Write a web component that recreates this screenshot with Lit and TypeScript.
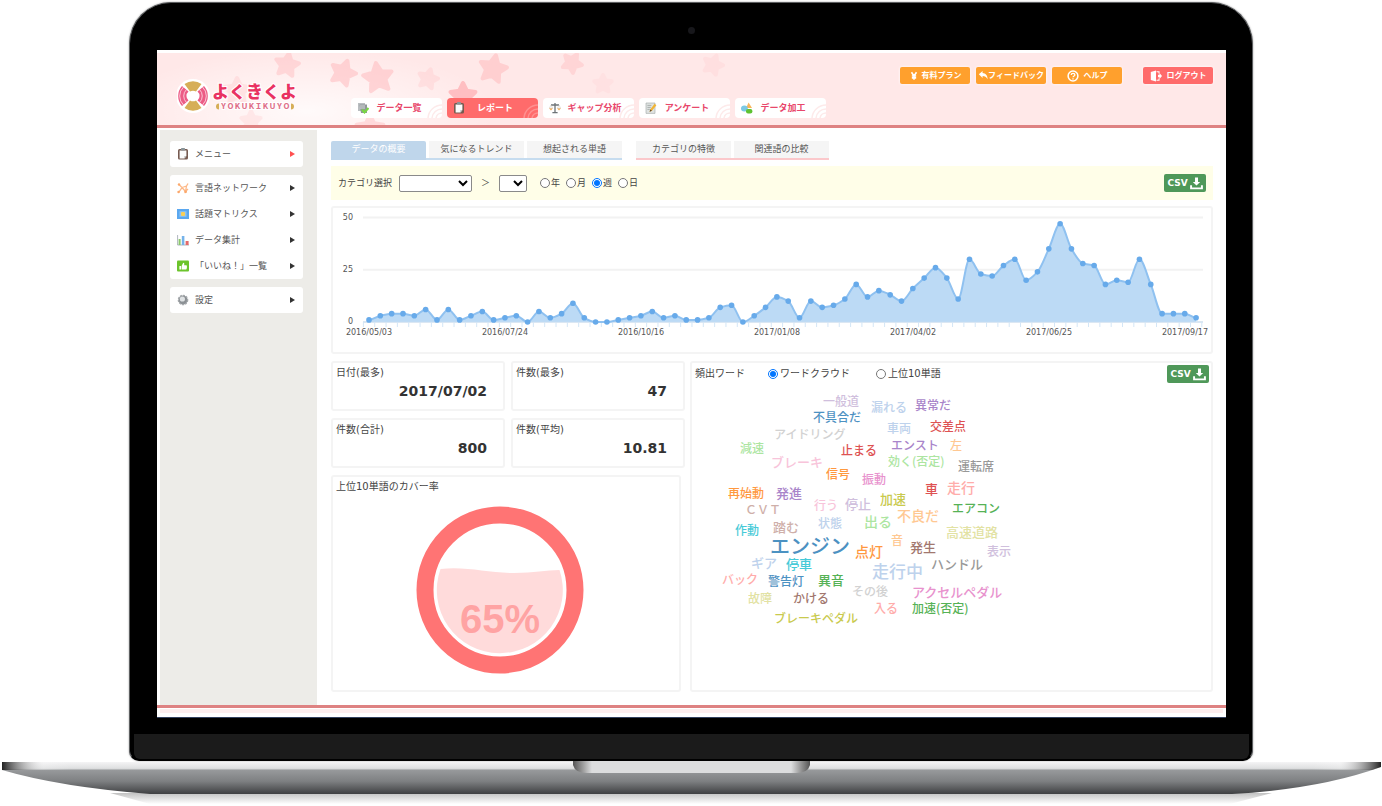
import { LitElement, html, svg, css } from "lit";
import { customElement, state } from "lit/decorators.js";
import { classMap } from "lit/directives/class-map.js";

/* ---------- icons ---------- */

const icon = (name: string) => html`<svg class="icon" viewBox="0 0 12 12" aria-hidden="true">${ICONS[name]}</svg>`;

const ICONS: Record<string, unknown> = {
  list: svg`<path d="M1 1h7v8H1z" fill="#b9bdc0"/><path d="M2.5 2.5H10V11H4z" fill="#8f9699"/><path d="M3 4h5M3 6h5" stroke="#e8ecec" stroke-width=".8"/><path d="M5 7.5 7.5 10.5 11.5 6" fill="none" stroke="#79d843" stroke-width="2"/>`,
  clip: svg`<rect x="1" y="1" width="10" height="10.5" rx="1.5" fill="#765a50"/><path d="M2.6 2.4h6.8v5.6L7.4 10.4H2.6z" fill="#fbfbfb"/><path d="M9.4 8 7.4 10.4V8z" fill="#b9b9b9"/><rect x="4" y="0" width="4" height="2.4" rx=".6" fill="#8a9498"/>`,
  scale: svg`<path d="M6 1v9M2 3h8M3.4 10.6h5.2" stroke="#6d7377" stroke-width="1.3" fill="none"/><path d="M0 6.2h4L2 8.4zM8 6.2h4L10 8.4z" fill="#f6ad52"/><path d="M2 3 .4 6.2h3.2zM10 3 8.4 6.2h3.2z" fill="none" stroke="#c9c2b8" stroke-width=".5"/>`,
  note: svg`<path d="M1 1h9v10.4H1z" fill="#dfe3e2" stroke="#9da5a4" stroke-width=".6"/><path d="M2.4 3.4h4M2.4 5.4h3.4M2.4 7.4h2.4" stroke="#9aa2a1" stroke-width=".8"/><path d="M4.6 9.8 5.2 7.4 9.6 1.8l1.8 1.4-4.4 5.6z" fill="#f1b434"/><path d="M4.6 9.8 5.2 7.4 7 8.8z" fill="#5c4a35"/>`,
  parts: svg`<path d="M7.6.6 11 6H5z" fill="#f8b55a"/><ellipse cx="3.4" cy="6.4" rx="3.4" ry="3" fill="#7cc9e4"/><rect x="5" y="7" width="6.4" height="4.4" rx="2" fill="#5ec232"/>`,
  net: svg`<path d="M2 2.5 5 5.5 2 10M5 5.5 9.5 4 11 1.5M5 5.5 8.5 9.5M9.5 4 8.5 9.5 11 7" fill="none" stroke="#fdb887" stroke-width="1.3"/><circle cx="2" cy="2.5" r="1.2" fill="#fba86c"/><circle cx="1.6" cy="10" r="1.3" fill="#fba86c"/><circle cx="8.6" cy="9.8" r="1.4" fill="#fba86c"/>`,
  matrix: svg`<rect y="1" width="12" height="10" fill="#5ba8f0"/><path d="M2.5 3.2h7v5.6h-7z" fill="#8cc4f6"/><rect x="4" y="4" width="4" height="4" rx="1" fill="#f9cf58"/>`,
  bars: svg`<path d="M.6 1v10H12" fill="none" stroke="#9aa3ad" stroke-width=".8"/><path d="M1.6 5h2v6h-2z" fill="#8ac76b"/><path d="M4.8 2h2.6v9H4.8z" fill="#76b3ea"/><path d="M8.6 7h3v4h-3z" fill="#e56a6a"/>`,
  like: svg`<rect y=".6" width="12" height="11" rx="1" fill="#6cc42c"/><path d="M2.4 6h1.6v3.6H2.4zM4.600 6 6.200 2.800c1.400 0 1.200 1.400.9 2.400h2.300c.9 0 .7 4.400-.5 4.400H4.600z" fill="#fff"/>`,
  gear: svg`<circle cx="6" cy="6" r="4.6" fill="#8b9094" stroke="#a5a9ac" stroke-width="1.4" stroke-dasharray="2 1"/><circle cx="5.4" cy="5" r="2.6" fill="#dfe2e4"/>`,
  yen: svg`<path d="M3 1.5 6 6 9 1.5M6 6v4.5M3.400 6h5.200M3.400 8.200h5.200" fill="none" stroke="#fff" stroke-width="1.9"/>`,
  back: svg`<path d="M1 4 5.500 0v2.400C9 2.600 11.500 5 11.500 10 10 7.200 8.200 6 5.500 6v2.300z" fill="#fff"/>`,
  help: svg`<circle cx="6" cy="6" r="4.9" fill="none" stroke="#fff" stroke-width="1.5"/><path d="M4.200 4.900C4.200 2.800 7.900 2.800 7.900 4.900 7.900 6 6 6 6 7.300M6 8.200v1.200" fill="none" stroke="#fff" stroke-width="1.3"/>`,
  exit: svg`<path d="M.8 2 6 .6v10.800L.8 10z" fill="#fff"/><path d="M6.500 1.800H9v1.800M6.500 10.200H9V8.400" fill="none" stroke="#fff" stroke-width="1.1"/><path d="M8 4.700h1.500V3L12 6 9.500 9V7.300H8z" fill="#fff"/>`,
  save: svg`<path d="M4.600.5h2.800v4h2L6 7.900 2.600 4.500h2z" fill="#fff"/><path d="M1 7.500v3h10v-3" fill="none" stroke="#fff" stroke-width="1.8"/>`,
};

/* ---------- data ---------- */

const NAV = [
  { label: "データ一覧", icon: "list" },
  { label: "レポート", icon: "clip" },
  { label: "ギャップ分析", icon: "scale" },
  { label: "アンケート", icon: "note" },
  { label: "データ加工", icon: "parts" },
];

const ACTIONS = [
  { label: "有料プラン", icon: "yen" },
  { label: "フィードバック", icon: "back" },
  { label: "ヘルプ", icon: "help" },
  { label: "ログアウト", icon: "exit" },
];

const MENU = [
  [{ label: "メニュー", icon: "clip" }],
  [
    { label: "言語ネットワーク", icon: "net" },
    { label: "話題マトリクス", icon: "matrix" },
    { label: "データ集計", icon: "bars" },
    { label: "「いいね！」一覧", icon: "like" },
  ],
  [{ label: "設定", icon: "gear" }],
];

const TAB_GROUPS = [
  { tone: "blue", tabs: ["データの概要", "気になるトレンド", "想起される単語"] },
  { tone: "pink", tabs: ["カテゴリの特徴", "関連語の比較"] },
];

const STATS = [
  ["日付(最多)", "2017/07/02"],
  ["件数(最多)", "47"],
  ["件数(合計)", "800"],
  ["件数(平均)", "10.81"],
];

const WEEKLY = [
  1, 3, 4, 4, 3, 6, 1, 6, 1, 3, 5, 1, 2, 3, 0, 5, 2, 4, 9, 2, 0, 0, 1, 2, 3, 5, 2, 3, 1, 1, 2, 7, 8, 0, 3, 7, 12, 10,
  2, 10, 7, 8, 11, 18, 12, 15, 13, 10, 16, 21, 26, 21, 11, 30, 23, 22, 27, 30, 20, 24, 35, 47, 35, 28, 27, 18, 20, 19,
  30, 18, 4, 4, 4, 2,
];
const DATES = ["2016/05/03", "2016/07/24", "2016/10/16", "2017/01/08", "2017/04/02", "2017/06/25", "2017/09/17"];

/* text, left, vertical middle, size, colour */
const WORDS: [string, number, number, number, string][] = [
  ["一般道", 131, 41, 12, "#c5b0d5"],
  ["漏れる", 179, 47, 12, "#aec7e8"],
  ["異常だ", 223, 45, 12, "#9467bd"],
  ["不具合だ", 121, 57, 12, "#1f77b4"],
  ["車両", 195, 68, 12, "#aec7e8"],
  ["交差点", 238, 66, 12, "#d62728"],
  ["アイドリング", 82, 74, 12, "#c7c7c7"],
  ["エンスト", 199, 85, 12, "#9467bd"],
  ["左", 258, 85, 12, "#ffbb78"],
  ["減速", 48, 88, 12, "#98df8a"],
  ["止まる", 149, 90, 12, "#d62728"],
  ["ブレーキ", 79, 101, 13, "#f7b6d2"],
  ["効く(否定)", 196, 101, 12, "#98df8a"],
  ["運転席", 266, 106, 12, "#7f7f7f"],
  ["信号", 134, 114, 12, "#ff7f0e"],
  ["振動", 170, 119, 12, "#e377c2"],
  ["車", 233, 128, 13, "#d62728"],
  ["走行", 255, 127, 14, "#ff9896"],
  ["再始動", 36, 133, 12, "#ff7f0e"],
  ["発進", 84, 132, 13, "#9467bd"],
  ["加速", 188, 138, 13, "#bcbd22"],
  ["行う", 122, 145, 12, "#f7b6d2"],
  ["停止", 153, 143, 13, "#c5b0d5"],
  ["ＣＶＴ", 53, 149, 12, "#c49c94"],
  ["エアコン", 260, 148, 12, "#2ca02c"],
  ["不良だ", 205, 155, 14, "#ffbb78"],
  ["状態", 126, 163, 12, "#aec7e8"],
  ["出る", 172, 161, 14, "#98df8a"],
  ["高速道路", 254, 171, 13, "#dbdb8d"],
  ["踏む", 81, 166, 13, "#c49c94"],
  ["作動", 43, 170, 12, "#17becf"],
  ["音", 199, 180, 12, "#ffbb78"],
  ["発生", 218, 186, 13, "#8c564b"],
  ["表示", 295, 191, 12, "#c5b0d5"],
  ["エンジン", 78, 186, 20, "#1f77b4"],
  ["点灯", 163, 191, 14, "#ff7f0e"],
  ["ギア", 59, 202, 13, "#aec7e8"],
  ["停車", 94, 203, 13, "#17becf"],
  ["走行中", 180, 211, 17, "#aec7e8"],
  ["ハンドル", 239, 203, 13, "#7f7f7f"],
  ["バック", 30, 219, 12, "#ff9896"],
  ["警告灯", 76, 221, 12, "#1f77b4"],
  ["異音", 126, 219, 13, "#2ca02c"],
  ["その後", 160, 231, 12, "#c7c7c7"],
  ["アクセルペダル", 220, 231, 13, "#e377c2"],
  ["故障", 56, 238, 12, "#dbdb8d"],
  ["かける", 101, 238, 12, "#8c564b"],
  ["入る", 182, 248, 12, "#ff9896"],
  ["加速(否定)", 220, 248, 12, "#2ca02c"],
  ["ブレーキペダル", 82, 258, 12, "#bcbd22"],
];

/* centre x, centre y, radius, turn, opacity */
const STARS: number[][] = [
  [130, 12, 12, 10, 0.5],
  [186, 20, 13, 20, 0.6],
  [221, 25, 15, -8, 0.6],
  [80, 38, 13, 0, 0.3],
  [271, 26, 10, 15, 0.3],
  [306, 43, 13, 0, 1],
  [336, 16, 14, 12, 0.6],
  [415, 10, 10, 30, 0.45],
  [446, 31, 9, 0, 0.15],
  [556, 12, 10, 20, 0.2],
  [94, 68, 10, 0, 0.25],
  [213, 76, 14, 0, 0.5],
];

const starPoints = (cx: number, cy: number, r: number, turn: number) =>
  Array.from({ length: 10 }, (_, i) => {
    const a = ((i * 36 - 90 + turn) * Math.PI) / 180;
    const d = i % 2 ? r * 0.5 : r;
    return `${(cx + d * Math.cos(a)).toFixed(1)},${(cy + d * Math.sin(a)).toFixed(1)}`;
  }).join(" ");

/* smooth curve through the points, flat at each local extreme */
function curve(p: number[][]): string {
  const slope = p.map((_, i) => {
    if (i === 0 || i === p.length - 1) return 0;
    const a = (p[i][1] - p[i - 1][1]) / (p[i][0] - p[i - 1][0]);
    const b = (p[i + 1][1] - p[i][1]) / (p[i + 1][0] - p[i][0]);
    return a * b <= 0 ? 0 : (2 * a * b) / (a + b);
  });
  let d = `M${p[0][0]} ${p[0][1]}`;
  for (let i = 1; i < p.length; i++) {
    const h = (p[i][0] - p[i - 1][0]) / 3;
    d += `C${p[i - 1][0] + h} ${p[i - 1][1] + slope[i - 1] * h} ${p[i][0] - h} ${p[i][1] - slope[i] * h} ${p[i][0]} ${p[i][1]}`;
  }
  return d;
}

@customElement("app-root")
export class AppRoot extends LitElement {
  @state() private unit = "週";
  @state() private wordView = "ワードクラウド";

  static styles = css`
    :host {
      display: block;
      box-sizing: border-box;
      min-height: 100vh;
      padding-top: 2px;
      background: #fff;
      color: #444;
      font-family: "DejaVu Sans", "Noto Sans CJK JP", sans-serif;
      font-size: 9px;
      line-height: 12px;
    }
    * { box-sizing: border-box; }
    a { color: inherit; text-decoration: none; }
    button { font: inherit; border: 0; padding: 0; cursor: pointer; }
    svg { display: block; }
    .icon { width: 12px; height: 12px; flex: none; }

    /* laptop */
    .lid {
      margin: 0 129px;
      padding: 0 26px 0 27px;
      border: 1px solid #5c5e60;
      border-bottom: 2px solid #000;
      border-radius: 42px 42px 10px 10px;
      background: #000;
      box-shadow: 0 0 2px #999;
    }
    .bezel { height: 47px; display: grid; place-items: center; padding-top: 8px; }
    .camera { width: 7px; height: 7px; border-radius: 50%; background: #17171b; }
    .chin { height: 25px; margin: 16px -23px 0; background: #1b1b1b; border-radius: 0 0 6px 6px; }
    .base { width: 100%; height: 46px; }
    .screen { background: #fff; padding: 3px 0 4px; border-bottom: 1px solid #33415e; }

    /* header */
    .header {
      position: relative;
      display: flex;
      height: 75px;
      padding: 0 13px 0 20px;
      background: #ffe8e8;
      border-bottom: 3px solid #de8282;
    }
    .stars { position: absolute; left: 0; top: 0; width: 640px; height: 72px; }
    .header > *:not(.stars) { position: relative; }
    .logo { width: 122px; height: 36px; margin: 25px 52px 0 0; flex: none; }
    .nav { display: flex; gap: 5px; align-self: flex-end; margin-bottom: 7px; }
    .nav a {
      position: relative;
      display: flex;
      align-items: center;
      width: 91px;
      height: 20px;
      padding: 0 13px 0 6px;
      border-radius: 4px;
      background: #fff;
      color: #e8476b;
      font-weight: 700;
      white-space: nowrap;
    }
    .nav span { flex: 1; display: flex; justify-content: center; }
    .nav .wide { padding-right: 6px; }
    .nav .on { background: #ff6b6b; color: #fff; }
    .arcs { position: absolute; right: 0; bottom: 0; width: 16px; height: 16px; stroke: #fdeaea; fill: none; }
    .on .arcs { stroke: #ff9090; }
    .actions { display: flex; gap: 6px; margin: 14px 0 0 auto; }
    .actions button {
      display: flex;
      align-items: center;
      justify-content: center;
      gap: 3px;
      width: 70px;
      height: 17px;
      border-radius: 2px;
      background: #ffa02d;
      box-shadow: 0 0 3px #fff;
      color: #fff;
      font-size: 8px;
      font-weight: 700;
      white-space: nowrap;
    }
    .actions .icon { width: 10px; height: 10px; }
    .actions button:nth-child(2) { gap: 0; }
    .actions button:nth-child(n + 3) { gap: 5px; }
    .actions button:nth-child(n + 3) .icon { width: 12px; height: 12px; }
    .actions button:last-child { margin-left: 15px; background: #ff6b6b; }

    /* body */
    .body { display: flex; margin: 0 0 1px; border-bottom: 3px solid #de8282; }
    .side {
      width: 157px;
      flex: none;
      margin: 2px 0 0 3px;
      padding: 11px 14px 0 10px;
      display: flex;
      flex-direction: column;
      gap: 8px;
      background: #edece8;
    }
    .side ul { margin: 0; padding: 0; list-style: none; background: #fff; border-radius: 3px; }
    .side a { display: flex; align-items: center; gap: 6px; height: 26px; padding: 0 8px 0 7px; color: #555; }
    .side a::after {
      content: "";
      margin-left: auto;
      border-left: 5px solid #333;
      border-top: 3px solid transparent;
      border-bottom: 3px solid transparent;
    }
    .side ul:first-child a::after { border-left-color: #ff5050; }
    .foot { height: 4px; background: #fdeeee; margin: 0 3px; }

    .main { flex: 1; min-width: 0; padding: 13px 13px 13px 14px; }
    .tabs { display: flex; gap: 14px; margin-bottom: 6px; }
    .group { display: flex; gap: 3px; height: 19px; border-bottom: 2px solid #c6dcef; }
    .group.pink { border-bottom-color: #fbc8cb; }
    .group a { width: 95px; height: 17px; background: #f5f5f5; text-align: center; line-height: 17px; color: #555; }
    .group .on { height: 19px; background: #bfd6eb; color: #fff; border-radius: 2px 2px 0 0; }

    .filter {
      display: flex;
      align-items: center;
      height: 34px;
      padding: 0 7px;
      margin-bottom: 6px;
      background: #fffee8;
    }
    .filter .field { display: flex; align-items: center; gap: 7px; }
    select { height: 17px; width: 73px; font-size: 9px; padding: 0; border: 1px solid #8a8a8a; border-radius: 2px; background: #fff; }
    .small { width: 28px; }
    .sep { width: 27px; text-align: center; }
    fieldset { display: flex; margin: 0; padding: 0; border: 0; }
    .units { gap: 6px; margin-left: 13px; }
    .units label, .views label { display: flex; align-items: center; gap: 1px; }
    input { width: 10px; height: 10px; margin: 0; }
    .csv {
      display: flex;
      align-items: center;
      justify-content: center;
      gap: 2px;
      width: 42px;
      height: 18px;
      margin-left: auto;
      border-radius: 2px;
      background: #4f9859;
      color: #fff;
      font-size: 9px;
      font-weight: 700;
    }
    .csv .icon { width: 13px; height: 13px; }

    .card { border: 2px solid #f4f4f4; border-radius: 3px; background: #fff; font-size: 10px; }
    .chart { margin-bottom: 7px; }
    .chart svg { width: 100%; height: auto; }
    .axis { font-size: 8px; fill: #555; }

    .lower { display: grid; grid-template-columns: 354fr 523fr; gap: 5px; }
    .stats { display: grid; grid-template-columns: 1fr 1fr; gap: 7px 6px; }
    .stat { height: 50px; margin: 0; padding: 3px 16px 0 3px; }
    .stat dt { line-height: 14px; }
    .stat dd { margin: 0; text-align: right; font-size: 14px; line-height: 22px; font-weight: 700; color: #333; }
    .cover { grid-column: 1 / 3; margin-right: 4px; height: 217px; padding: 3px 16px 0 3px; }
    .cover h2, .cloud h2 { margin: 0; font-size: 10px; line-height: 14px; font-weight: 400; }
    .gauge { width: 168px; height: 168px; margin: 12px auto 0; }
    .gauge text { font: 700 40px "Liberation Sans", sans-serif; fill: #ffa3a3; }
    .head { display: flex; align-items: center; padding: 2px 2px 0 3px; }
    .views { gap: 26px; margin-left: 23px; }
    .views label { gap: 2px; }
    .cloud svg.words { width: 100%; height: auto; }
    .words text { opacity: 0.8; font-family: "Noto Sans CJK JP", sans-serif; font-weight: 500; }
  `;

  private chart() {
    const base = 114;
    const pts = WEEKLY.map((v, i) => [36 + i * 11.33, base - v * 2.09]);
    const line = curve(pts);
    return html`<section class="card chart" aria-label="週別件数">
      <svg viewBox="0 0 878 144" role="img">
        ${[50, 25, 0].map(
          (v) => svg`<path d=${`M30 ${base - v * 2.09}H870`} stroke="#f2f2f2" stroke-width="2"/>
            <text class="axis" x="20" y=${base + 2 - v * 2.09} text-anchor="end">${v}</text>`
        )}
        <path d="${line}V${base}H${pts[0][0]}Z" fill="#bcdaf5" />
        <path d="M30 ${base}H870" stroke="#c3dcf3" />
        ${Array.from({ length: 75 }, (_, i) => svg`<path d=${`M${30.4 + i * 11.33} ${base}v5`} stroke="#d4e6f6"/>`)}
        <path d=${line} fill="none" stroke="#8fc1f0" stroke-width="2" />
        ${pts.map((p) => svg`<circle cx=${p[0]} cy=${p[1]} r="2.8" fill="#67aaea"/>`)}
        ${DATES.map((d, i) => svg`<text class="axis" x=${36 + i * 136} y="127" text-anchor="middle">${d}</text>`)}
      </svg>
    </section>`;
  }

  private logo() {
    return html`<svg class="logo" viewBox="0 0 122 36" role="img" aria-label="よくきくよ">
      <circle cx="16" cy="18" r="17" fill="#fff" />
      <path d="M7.500 6A15 15 0 0 1 24.500 6L19 13.500A6 6 0 0 0 13 13.500Z" fill="#d6ae57" />
      <path d="M7.500 30A15 15 0 0 0 24.500 30L19 22.500A6 6 0 0 1 13 22.500Z" fill="#d6ae57" />
      <path d="M5 8A15 15 0 0 0 5 28L11.500 22.500A6 6 0 0 1 11.500 13.500Z" fill="#ec5c86" />
      <path d="M27 8A15 15 0 0 1 27 28L20.500 22.500A6 6 0 0 0 20.500 13.500Z" fill="#ec5c86" />
      <path d="M6.500 9A12.500 12.500 0 0 0 6.500 27M9.500 11.500A9 9 0 0 0 9.500 24.500M25.500 9A12.500 12.500 0 0 1 25.500 27M22.500 11.500A9 9 0 0 1 22.500 24.500" fill="none" stroke="#fde3ea" stroke-width=".8" />
      <g font-family="Noto Sans CJK JP, sans-serif" font-weight="900" fill="#e93262" stroke="#fff" stroke-width="2" paint-order="stroke">
        <text x="35" y="20" font-size="17">よくきくよ</text>
        <text x="43" y="31" font-size="7" fill="#e0708a">ＹＯＫＵＫＩＫＵＹＯ</text>
      </g>
      <path d="M42 25.500a3 3 0 1 0 0 6zM114 25.500a3 3 0 1 1 0 6z" fill="#d6ae57" />
    </svg>`;
  }

  render() {
    return html`
      <div class="lid">
        <div class="bezel"><div class="camera"></div></div>
        <div class="screen">
          <header class="header">
            <svg class="stars" viewBox="0 0 640 72" aria-hidden="true">
              <defs>
                <radialGradient id="glow"><stop offset="0" stop-color="#fff" stop-opacity=".8" /><stop offset="1" stop-color="#fff" stop-opacity="0" /></radialGradient>
              </defs>
              <ellipse cx="150" cy="58" rx="190" ry="62" fill="url(#glow)" />
              ${STARS.map(([x, y, r, t, o]) => svg`<polygon points=${starPoints(x, y, r, t)} fill="#ffb4b8" opacity=${o * 0.8} stroke="#ffb4b8" stroke-width="4" stroke-linejoin="round"/>`)}
            </svg>
            ${this.logo()}
            <nav class="nav">
              ${NAV.map(
                (n, i) => html`<a href="#" class=${classMap({ on: i === 1, wide: i === 2 })}>
                  ${icon(n.icon)}<span>${n.label}</span>
                  <svg class="arcs" viewBox="0 0 16 16" aria-hidden="true"><path d="M2 16A14 14 0 0 1 16 3M6 16A10 10 0 0 1 16 7M10 16A6 6 0 0 1 16 11" stroke-width="1.5" /></svg>
                </a>`
              )}
            </nav>
            <div class="actions">
              ${ACTIONS.map((a) => html`<button type="button">${icon(a.icon)}${a.label}</button>`)}
            </div>
          </header>
          <div class="body">
            <aside class="side">
              ${MENU.map(
                (g) => html`<ul>
                  ${g.map((m) => html`<li><a href="#">${icon(m.icon)}${m.label}</a></li>`)}
                </ul>`
              )}
            </aside>
            <main class="main">
              <nav class="tabs">
                ${TAB_GROUPS.map(
                  (g) => html`<div class="group ${g.tone}">
                    ${g.tabs.map((t) => html`<a href="#" class=${classMap({ on: t === "データの概要" })}>${t}</a>`)}
                  </div>`
                )}
              </nav>
              <form class="filter">
                <div class="field">
                  <label for="category">カテゴリ選択</label>
                  <select id="category"><option></option></select>
                </div>
                <span class="sep">＞</span>
                <select class="small" aria-label="サブカテゴリ"><option></option></select>
                <fieldset class="units" aria-label="集計単位">
                  ${["年", "月", "週", "日"].map(
                    (u) => html`<label><input type="radio" name="unit" .checked=${u === this.unit} @change=${() => (this.unit = u)} />${u}</label>`
                  )}
                </fieldset>
                <button type="button" class="csv">CSV${icon("save")}</button>
              </form>
              ${this.chart()}
              <div class="lower">
                <div class="stats">
                  ${STATS.map(([k, v]) => html`<dl class="card stat"><dt>${k}</dt><dd>${v}</dd></dl>`)}
                  <section class="card cover">
                    <h2>上位10単語のカバー率</h2>
                    <svg class="gauge" viewBox="0 0 168 168" role="img" aria-label="65%">
                      <circle cx="84" cy="84" r="75" fill="none" stroke="#ff7474" stroke-width="17" />
                      <path d="M24.500 63C50 60 72 67 98 67 118 67 130 64 143.500 64A63 63 0 1 1 24.500 63Z" fill="#ffdbdb" />
                      <text x="84" y="127" text-anchor="middle">65%</text>
                    </svg>
                  </section>
                </div>
                <section class="card cloud">
                  <div class="head">
                    <h2>頻出ワード</h2>
                    <fieldset class="views" aria-label="表示形式">
                      ${["ワードクラウド", "上位10単語"].map(
                        (v) => html`<label><input type="radio" name="view" .checked=${v === this.wordView} @change=${() => (this.wordView = v)} />${v}</label>`
                      )}
                    </fieldset>
                    <button type="button" class="csv">CSV${icon("save")}</button>
                  </div>
                  <svg class="words" viewBox="0 22 519 300">
                    ${WORDS.map(([w, x, y, s, c]) => svg`<text x=${x} y=${y + Math.round(s * 0.36)} font-size=${s} fill=${c}>${w}</text>`)}
                  </svg>
                </section>
              </div>
            </main>
          </div>
          <div class="foot"></div>
        </div>
        <div class="chin"></div>
      </div>
      <svg class="base" viewBox="0 0 1382 46" preserveAspectRatio="none" aria-hidden="true">
        <defs>
          <linearGradient id="metal" x1="0" y1="0" x2="0" y2="1">
            <stop offset="0" stop-color="#f4f4f5" /><stop offset=".2" stop-color="#dedfe0" /><stop offset=".26" stop-color="#97999b" />
            <stop offset=".6" stop-color="#7e8082" /><stop offset="1" stop-color="#3f4042" />
          </linearGradient>
          <linearGradient id="ends">
            <stop offset="0" stop-color="#222" /><stop offset=".012" stop-color="#666" stop-opacity=".6" /><stop offset=".03" stop-color="#fff" stop-opacity=".2" />
            <stop offset=".05" stop-color="#fff" stop-opacity="0" /><stop offset=".95" stop-color="#fff" stop-opacity="0" />
            <stop offset=".97" stop-color="#fff" stop-opacity=".2" /><stop offset=".988" stop-color="#666" stop-opacity=".6" /><stop offset="1" stop-color="#222" />
          </linearGradient>
          <linearGradient id="shade" x1="0" y1="0" x2="0" y2="1">
            <stop offset="0" stop-color="#999" /><stop offset="1" stop-color="#fff" />
          </linearGradient>
          <linearGradient id="notch">
            <stop offset="0" stop-color="#555" /><stop offset=".03" stop-color="#888" /><stop offset=".08" stop-color="#dcddde" />
            <stop offset=".92" stop-color="#dcddde" /><stop offset=".97" stop-color="#888" /><stop offset="1" stop-color="#555" />
          </linearGradient>
        </defs>
        <path d="M110 32H1272L1230 43H150Z" fill="url(#shade)" opacity=".6" />
        <path d="M2 1H1381V6Q1320 28 1232 33H150Q60 26 2 9Z" fill="url(#metal)" />
        <path d="M2 1H1381V6L1372 9H10L2 9Z" fill="url(#ends)" />
        <path d="M573 0H810V4Q808 12 796 12H587Q575 12 573 4Z" fill="url(#notch)" />
      </svg>
    `;
  }
}
